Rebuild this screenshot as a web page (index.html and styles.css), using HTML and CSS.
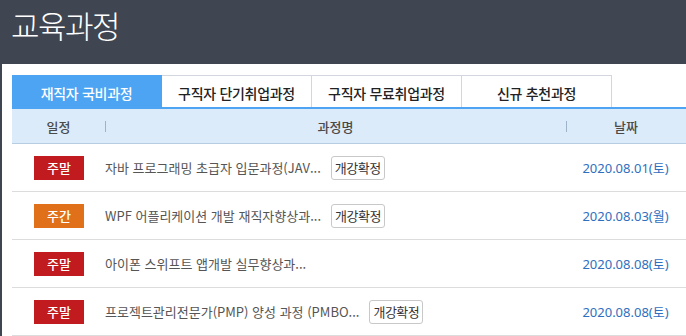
FILE: index.html
```html
<!DOCTYPE html>
<html lang="ko">
<head>
<meta charset="utf-8">
<title>교육과정</title>
<link rel="stylesheet" href="styles.css">
</head>
<body>
<header class="top">
  <h1 class="title">교육과정</h1>
</header>
<main class="panel">
  <nav class="tabs">
    <a class="tab active">재직자 국비과정</a>
    <a class="tab">구직자 단기취업과정</a>
    <a class="tab">구직자 무료취업과정</a>
    <a class="tab">신규 추천과정</a>
  </nav>
  <div class="table">
    <div class="thead">
      <div class="th">일정</div>
      <div class="th sep">과정명</div>
      <div class="th sep">날짜</div>
    </div>
    <div class="row">
      <div class="cell"><span class="badge red">주말</span></div>
      <div class="cell name"><span class="course">자바 프로그래밍 초급자 입문과정(JAV...</span><span class="btn">개강확정</span></div>
      <div class="cell date">2020.08.01(토)</div>
    </div>
    <div class="row">
      <div class="cell"><span class="badge orange">주간</span></div>
      <div class="cell name"><span class="course">WPF 어플리케이션 개발 재직자향상과...</span><span class="btn">개강확정</span></div>
      <div class="cell date">2020.08.03(월)</div>
    </div>
    <div class="row">
      <div class="cell"><span class="badge red">주말</span></div>
      <div class="cell name"><span class="course">아이폰 스위프트 앱개발 실무향상과...</span></div>
      <div class="cell date">2020.08.08(토)</div>
    </div>
    <div class="row">
      <div class="cell"><span class="badge red">주말</span></div>
      <div class="cell name"><span class="course">프로젝트관리전문가(PMP) 양성 과정 (PMBO...</span><span class="btn">개강확정</span></div>
      <div class="cell date">2020.08.08(토)</div>
    </div>
  </div>
</main>
</body>
</html>
```

FILE: styles.css
```css
* { box-sizing: border-box; }
html, body { margin: 0; padding: 0; }
body {
  background: #3f4651;
  font-family: "Noto Sans CJK KR", "Noto Sans", sans-serif;
  height: 336px;
  overflow: hidden;
}
.top {
  height: 64px;
  padding: 4px 0 0 11px;
}
.title {
  margin: 0;
  color: #ffffff;
  font-size: 31px;
  font-weight: 300;
  letter-spacing: -1.5px;
  line-height: 42px;
}
.panel {
  margin-left: 2px;
  background: #ffffff;
  padding: 11px 0 0 10px;
  height: 272px;
}
.tabs {
  display: flex;
  height: 32px;
}
.tab {
  width: 150px;
  height: 32px;
  display: flex;
  align-items: center;
  justify-content: center;
  border-top: 1px solid #d3d6de;
  border-right: 1px solid #d3d6de;
  color: #222;
  font-size: 14px;
  font-weight: 500;
  letter-spacing: -0.3px;
  padding-top: 2px;
}
.tab.active {
  background: #4da4f2;
  color: #fff;
  border-color: #4da4f2;
}
.table {
  border-top: 2px solid #4da4f2;
}
.thead {
  display: grid;
  grid-template-columns: 93px 461px 1fr;
  height: 35px;
  background: #dcebf9;
  border-bottom: 1px solid #b6cde4;
}
.th {
  display: flex;
  align-items: center;
  justify-content: center;
  color: #4a4a4a;
  font-size: 13px;
  font-weight: 500;
  position: relative;
}
.th.sep::before {
  content: "";
  position: absolute;
  left: 0;
  top: 12px;
  height: 11px;
  width: 1px;
  background: #9fb3c8;
}
.row {
  display: grid;
  grid-template-columns: 93px 461px 1fr;
  height: 48px;
  border-bottom: 1px solid #dcdcdc;
}
.cell {
  display: flex;
  align-items: center;
  justify-content: center;
}
.badge {
  width: 50px;
  height: 24px;
  display: flex;
  align-items: center;
  justify-content: center;
  color: #fff;
  font-size: 13px;
  font-weight: 500;
  margin-left: 1px;
}
.badge.red { background: #c11b1f; }
.badge.orange { background: #e0711a; }
.cell.name {
  justify-content: flex-start;
  gap: 10px;
}
.course {
  color: #555;
  font-size: 13px;
}
.btn {
  border: 1px solid #c8c8c8;
  border-radius: 3px;
  height: 24px;
  padding: 0 3px;
  display: flex;
  align-items: center;
  color: #333;
  font-size: 13px;
  letter-spacing: -0.5px;
}
.cell.date {
  color: #2f6fbf;
  font-size: 13px;
  font-family: "Noto Sans", "Noto Sans CJK KR", sans-serif;
  margin-left: -1px;
}
```
